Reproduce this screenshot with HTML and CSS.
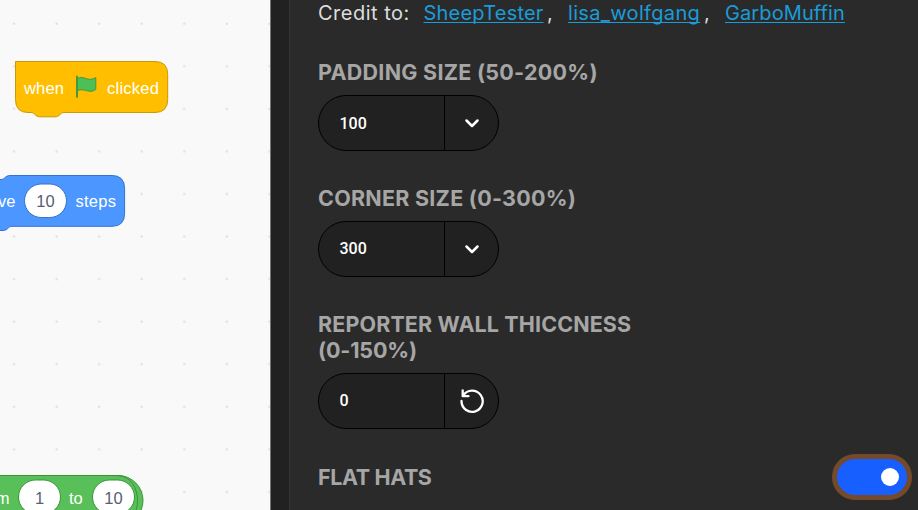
FILE: index.html
```html
<!DOCTYPE html>
<html lang="en">
<head>
<meta charset="utf-8">
<title>Block settings</title>
<link rel="stylesheet" href="styles.css">
</head>
<body>
<div class="app">
  <svg class="workspace" width="270" height="510" viewBox="0 0 270 510">
    <defs>
      <pattern id="grid" x="-7.5" y="2.2" width="42.56" height="42.56" patternUnits="userSpaceOnUse">
        <rect x="20.5" y="20.5" width="2" height="2" fill="#dcdcdc"/>
      </pattern>
    </defs>
    <rect width="270" height="510" fill="#f9f9f9"/>
    <rect width="270" height="510" fill="url(#grid)"/>
    <g class="block-text">
      <path d="M15.5 61.5H155Q167.700 61.500 167.700 74.500V99.500Q167.700 112.500 155 112.500H64C60 112.500 60 116.800 55 116.800H40C35 116.800 35 112.500 31 112.500H28Q15.500 112.500 15.500 99.500Z" fill="#ffbf00" stroke="#cc9900"/>
      <text x="24" y="94" textLength="40">when</text>
      <path d="M77 79C83 74 88 83 95.800 77.500V89.500C89 94.500 84 87 77 91Z" fill="#4cbf56" stroke="#45993d"/>
      <path d="M77 76.500V97" stroke="#45993d" stroke-width="2" stroke-linecap="round"/>
      <text x="107" y="94" textLength="52">clicked</text>

      <path d="M-10 179.500H1C5 179.500 5 175.500 10 175.500H112Q124.600 175.500 124.600 188.500V213.500Q124.600 226.300 112 226.300H12C8 226.300 8 230.500 3 230.500H-10Z" fill="#4c97ff" stroke="#3373cc"/>
      <text x="15.500" y="207" text-anchor="end">move</text>
      <rect x="24.500" y="184" width="42" height="33.500" rx="16.750" fill="#fff" stroke="#3373cc"/>
      <text class="value" x="45.500" y="207">10</text>
      <text x="75.500" y="207" textLength="40.500">steps</text>

      <path d="M-10 475.500H118A25 25 0 0 1 118 525.500H-10Z" fill="#59c059" stroke="#389438"/>
      <path d="M118 475.500C144 477 144 524 118 525.500" fill="none" stroke="#389438"/>
      <text x="9.500" y="504" text-anchor="end">random</text>
      <rect x="18.500" y="480" width="42" height="34" rx="17" fill="#fff" stroke="#389438"/>
      <text class="value" x="39.500" y="504">1</text>
      <text x="69" y="504">to</text>
      <rect x="92.500" y="480" width="42" height="34" rx="17" fill="#fff" stroke="#389438"/>
      <text class="value" x="113.500" y="504">10</text>
    </g>
  </svg>
  <div class="divider"></div>
  <main class="settings">
    <p class="credits"><span class="lead">Credit to:</span><span class="c1"><a>SheepTester</a></span><span class="comma">,</span><span class="c2"><a>lisa_wolfgang</a></span><span class="comma">,</span><span class="c3"><a>GarboMuffin</a></span></p>
    <section class="setting">
      <h2><span class="t1">PADDING SIZE (50-200%)</span></h2>
      <div class="control"><span class="number low">100</span><span class="action"><svg width="26" height="26" viewBox="0 0 26 26"><path d="M7.500 10.500L13 16L18.500 10.500" stroke-width="2.500"/></svg></span></div>
    </section>
    <section class="setting">
      <h2><span class="t2">CORNER SIZE (0-300%)</span></h2>
      <div class="control"><span class="number">300</span><span class="action"><svg width="26" height="26" viewBox="0 0 26 26"><path d="M7.500 10.500L13 16L18.500 10.500" stroke-width="2.500"/></svg></span></div>
    </section>
    <section class="setting">
      <h2><span class="t3">REPORTER WALL THICCNESS</span><br><span class="t4">(0-150%)</span></h2>
      <div class="control"><span class="number">0</span><span class="action"><svg width="26" height="26" viewBox="0 0 26 26"><path d="M3.700 2.500V8.200H9.500M2.500 13A10.600 10.600 0 1 0 4.300 7.300" stroke-width="2.300"/></svg></span></div>
    </section>
    <section class="setting toggle-row">
      <h2><span class="t5">FLAT HATS</span></h2>
      <span class="toggle"><i></i></span>
    </section>
  </main>
</div>
</body>
</html>
```
FILE: styles.css
```css
* { box-sizing: border-box; }
body { margin: 0; background: #2a2a2a; overflow: hidden; }
.app { display: flex; width: 918px; height: 510px; overflow: hidden; }
.workspace { display: block; flex: none; }
.block-text text { font: 500 16.5px "Liberation Sans", Arial, sans-serif; fill: #fff; }
.block-text .value { fill: #575e75; text-anchor: middle; }
.divider { flex: none; width: 19px; background: #212121; border-left: 1px solid #777; }
.settings {
  flex: 1;
  padding: 0 6px 0 28px;
  background: #2a2a2a;
  border-left: 1px solid #333;
  font-family: Inter, sans-serif;
}
.credits { display: flex; margin: 0 0 33px; font-size: 20px; line-height: 26px; color: #ddd; white-space: pre; }
.credits a { color: #1b9cd8; text-decoration: underline; text-decoration-thickness: 1px; text-underline-offset: 2px; text-decoration-skip-ink: none; }
.lead { width: 105.500px; letter-spacing: 0.5px; }
.c1 { width: 121px; letter-spacing: 0.21px; }
.c2 { width: 133.500px; letter-spacing: 0.33px; }
.c3 { letter-spacing: 0.1px; }
.comma { width: 23.500px; padding-left: 2.500px; }
.setting { margin-bottom: 34px; }
.setting h2 { margin: 0 0 10px; font-size: 21.5px; font-weight: 700; line-height: 26px; color: #a6a6a6; white-space: nowrap; }
.t1 { letter-spacing: 0.27px; }
.t2 { letter-spacing: 0.25px; }
.t3 { letter-spacing: 0.12px; }
.t4 { letter-spacing: -0.15px; }
.t5 { letter-spacing: -0.38px; }
.control { display: flex; width: 181px; height: 56px; background: #212121; border: 1px solid #000; border-radius: 28px; overflow: hidden; }
.number { width: 126px; padding-left: 20.5px; border-right: 1px solid #000; font: 500 16px/54px Roboto, sans-serif; color: #fff; }
.low { line-height: 56px; }
.action { display: flex; flex: 1; align-items: center; justify-content: center; }
.action svg { fill: none; stroke: #fff; stroke-linecap: round; stroke-linejoin: round; }
.toggle-row { display: flex; justify-content: space-between; align-items: flex-start; padding-top: 1px; }
.toggle { display: flex; align-items: center; justify-content: flex-end; width: 80px; height: 46px; margin-top: -10px; padding-right: 8px; border: 5px solid #754a2a; border-radius: 23px; background: #175fff; }
.toggle i { width: 18px; height: 18px; border-radius: 50%; background: #fff; }
```
